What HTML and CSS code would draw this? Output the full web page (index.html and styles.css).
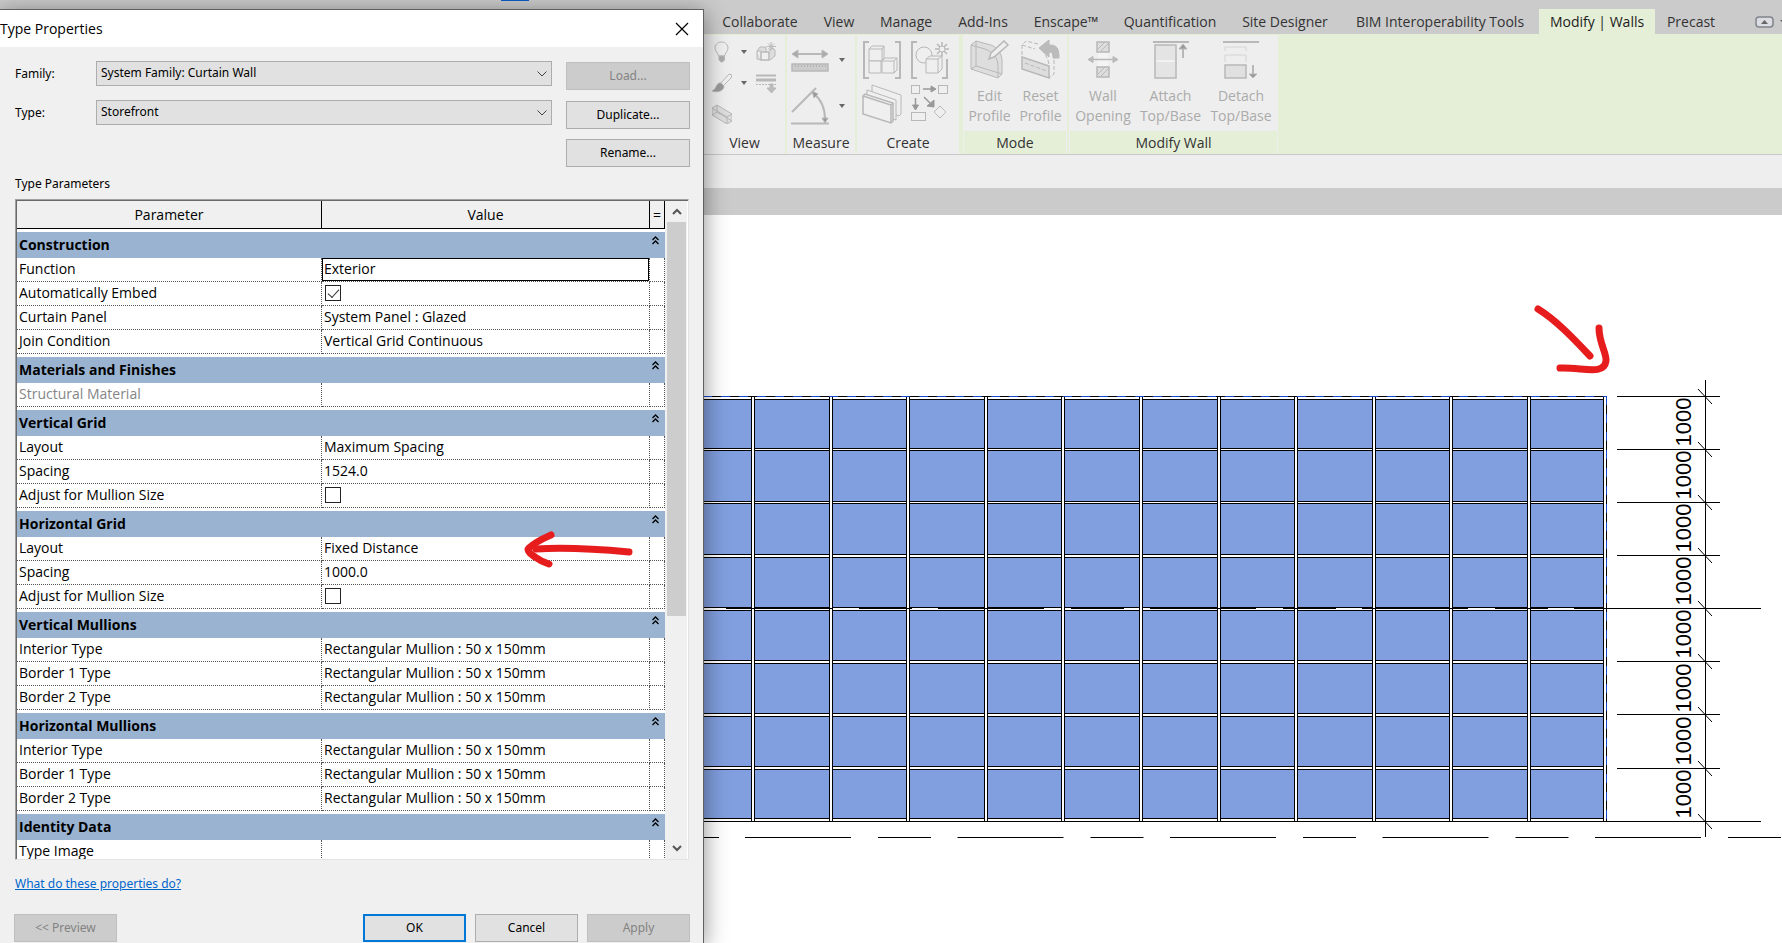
FILE: index.html
```html
<!DOCTYPE html>
<html lang="en">
<head>
<meta charset="utf-8">
<title>Type Properties</title>
<link rel="stylesheet" href="styles.css">
<script src="drawing.js" defer></script>
</head>
<body>
<div class="app">
  <nav class="tabs">
    <a class="tab" href="#">Collaborate</a>
    <a class="tab" href="#">View</a>
    <a class="tab" href="#">Manage</a>
    <a class="tab" href="#">Add-Ins</a>
    <a class="tab" href="#">Enscape™</a>
    <a class="tab" href="#">Quantification</a>
    <a class="tab" href="#">Site Designer</a>
    <a class="tab" href="#">BIM Interoperability Tools</a>
    <a class="tab active" href="#">Modify | Walls</a>
    <a class="tab" href="#">Precast</a>
    <button class="collapse" aria-label="Minimize ribbon">
      <svg width="27" height="12" viewBox="0 0 27 12"><rect x="1" y="1" width="17" height="10" rx="3" fill="#dcdde2" stroke="#80848c" stroke-width="1.5"/><path d="M6 8h7L9.500 4z" fill="#666"/><path d="M25 4h6l-3 3z" fill="#555"/></svg>
    </button>
  </nav>

  <div class="ribbon">
    <section class="panel">
      <div class="tools view-tools">
        <button class="tool" aria-label="Hide in view"><svg width="20" height="22" viewBox="0 0 20 22" class="ico"><path d="M9.500 1C5 1 3 4.500 3 7c0 3 3 5 3.500 8h6C13 12 16 10 16 7c0-2.500-2-6-6.500-6z"/><path d="M7 15v4l2 2h1.500l2-2v-4z" fill="#aaa"/></svg></button>
        <button class="tool" aria-label="Hide options"><span class="caret"></span></button>
        <button class="tool" aria-label="Displace elements"><svg width="20" height="20" viewBox="0 0 20 20" class="ico"><path d="M1 9l3-4h6v5M1 9v8l4 1M1 9h4M13 8l4-2 2 2v6l-5 4" fill="#ddd"/><rect x="5" y="10" width="8" height="8" stroke-width="1.500"/><path d="M15 0v9M11 4.500h9M12 1.500l6 6M18 1.500l-6 6"/></svg></button>
        <button class="tool" aria-label="Override graphics"><svg width="20" height="20" viewBox="0 0 20 20" class="ico"><path d="M8 11L17 1l3 1-1 3-8 8z"/><path d="M9 10c-5-1-4 6-9 8 5 2 12 0 12-5z" fill="#999"/></svg></button>
        <button class="tool" aria-label="Override options"><span class="caret"></span></button>
        <button class="tool" aria-label="Linework"><svg width="20" height="20" viewBox="0 0 20 20" class="ico"><path d="M0 2.500h20" stroke-width="2"/><path d="M0 7h20" stroke-width="3"/><path d="M0 11.500h20" stroke-dasharray="2 1"/><path d="M14 11h3v4h3l-4.500 5L11 15h3z" fill="#bbb"/></svg></button>
        <button class="tool" aria-label="Selection box"><svg width="20" height="20" viewBox="0 0 20 20" class="ico"><path d="M0 4l5-3 15 9v7l-5 3L0 11z" fill="#ddd"/><path d="M0 4l15 9v7M15 13l5-3M5 1v7l15 9M0 11l5-3" fill="none"/></svg></button>
      </div>
      <h2>View</h2>
    </section>
    <section class="panel">
      <div class="tools measure-tools">
        <button class="tool" aria-label="Measure"><svg width="38" height="24" viewBox="0 0 38 24" class="ico"><path d="M2 6h34" stroke-width="2"/><path d="M1 6l6-4v8zM37 6l-6-4v8z" fill="#aaa"/><rect x="1" y="16" width="36" height="7" fill="#ccc" stroke-width="1.500"/><path d="M4 18h31" stroke="#999" stroke-dasharray="1 2"/></svg></button>
        <button class="tool" aria-label="Measure options"><span class="caret"></span></button>
        <button class="tool" aria-label="Angular dimension"><svg width="38" height="38" viewBox="0 0 38 38" class="ico"><path d="M1 25L25 1M0 36.500h38" stroke-width="2"/><path d="M23 7c8 6 11 16 11 26" stroke-width="2" fill="none"/><path d="M21 4l6 3-4 4zM31 31h6l-3 5z" fill="#999"/></svg></button>
        <button class="tool" aria-label="Angle options"><span class="caret"></span></button>
      </div>
      <h2>Measure</h2>
    </section>
    <section class="panel">
      <div class="tools create-tools">
        <button class="tool" aria-label="Create group"><svg width="40" height="38" viewBox="0 0 40 38" class="ico"><path d="M7 1H2v36h5M33 1h5v36h-5" stroke-width="2" fill="none"/><path d="M7 8l3-3h12v12l-2 3M7 8h13v12H7zM20 8l2-3"/><path d="M7 20h12v12H7zM20 20h12v12H20zM20 20l3-3h12v12l-3 3M32 20l3-3"/></svg></button>
        <button class="tool" aria-label="Create similar"><svg width="40" height="38" viewBox="0 0 40 38" class="ico"><path d="M7 1H2v36h5M32 37h5V18" stroke-width="2" fill="none"/><circle cx="14" cy="14" r="8"/><path d="M16 18l4-3h12v13l-4 4M16 18h12v14H16zM28 18l4-3"/><path d="M32 1v14M25 8h14M27 3l10 10M37 3L27 13" stroke-width="1.500"/><circle cx="32" cy="8" r="3"/></svg></button>
        <button class="tool" aria-label="Create assembly"><svg width="40" height="40" viewBox="0 0 40 40" class="ico"><path d="M10 1l29 10v19l-2 2L10 20z"/><path d="M5 6l29 10v20L5 26z"/><path d="M1 12l2-2 28 9v18l-2 2L1 30zM1 12l28 9v18M29 21l2-2" stroke-width="1.500"/></svg></button>
        <button class="tool" aria-label="Create parts"><svg width="40" height="40" viewBox="0 0 40 40" class="ico"><rect x="1.500" y="1.500" width="8" height="8"/><rect x="28.500" y="1.500" width="9" height="8"/><rect x="1.500" y="28.500" width="14" height="8"/><path d="M30 22l6 6-6 6-6-6z"/><path d="M13 5h9M5.500 14v8M14 13l6 6" stroke="#999" stroke-width="1.500"/><path d="M21 2l5 3-5 3zM2.500 21h6l-3 5zM24 23v-7l-7 6z" fill="#999" stroke="#999"/></svg></button>
      </div>
      <h2>Create</h2>
    </section>
    <section class="panel contextual first">
      <div class="tools mode-tools">
        <button class="tool labelled" disabled><svg width="40" height="40" viewBox="0 0 40 40" class="ico"><path d="M1 5l5-4 15 4c7 3 11 9 11 16v13l-4 4L1 29z" fill="#dedede"/><path d="M1 5l14 4c8 3 13 9 13 17v12M1 29l5-3 26 8M6 1v25" fill="none"/><path d="M19 19l2-6L34 1l4 4-14 12z" stroke-width="1.500"/></svg><span>Edit<br>Profile</span></button>
        <button class="tool labelled" disabled><svg width="40" height="40" viewBox="0 0 40 40" class="ico"><path d="M1 17l27 9v12L1 29z" fill="#ddd" stroke-width="1.500"/><path d="M1 15V5l4-4 12 3M1 5l13 4M28 24c-1-5-3-9-6-12M33 20v14l-5 4M4 23l22 8" fill="none" stroke-dasharray="4 2"/><path d="M18 8l10-8v5c8 0 10 3 10 13h-6c0-5-1-6-4-6v5z" fill="#bbb"/></svg><span>Reset<br>Profile</span></button>
      </div>
      <h2>Mode</h2>
    </section>
    <section class="panel contextual">
      <div class="tools wall-tools">
        <button class="tool labelled" disabled><svg width="32" height="40" viewBox="0 0 32 40" class="ico"><path d="M10 2h12v10H10zM10 27h12v10H10z" fill="#ddd" stroke-width="1.500"/><path d="M11 9l7-7M14 11l8-8M11 34l7-7M14 36l8-8"/><path d="M11 13v13h10V13z" fill="#f4f4f4" stroke="none"/><path d="M4 19.500h24" stroke-width="1.500"/><path d="M1 19.500l5-3v6zM31 19.500l-5-3v6z" fill="#bbb"/></svg><span>Wall<br>Opening</span></button>
        <button class="tool labelled" disabled><svg width="38" height="40" viewBox="0 0 38 40" class="ico"><path d="M1 2h36" stroke-width="2"/><rect x="3" y="5" width="21" height="33" fill="#e4e4e4" stroke-width="1.500"/><path d="M4 21h19" stroke="#fff"/><path d="M31 18V9" stroke-width="2"/><path d="M27 9h8l-4-5z" fill="#999"/></svg><span>Attach<br>Top/Base</span></button>
        <button class="tool labelled" disabled><svg width="38" height="40" viewBox="0 0 38 40" class="ico"><path d="M1 2h36" stroke-width="2"/><path d="M3 11V7h21v4M3 22v-7h21v7" fill="none" stroke="#d4d4d4"/><rect x="3" y="25" width="21" height="13" fill="#e0e0e0" stroke-width="1.500"/><path d="M31 25v9" stroke-width="2"/><path d="M27 34h8l-4 4z" fill="#999"/></svg><span>Detach<br>Top/Base</span></button>
      </div>
      <h2>Modify Wall</h2>
    </section>
  </div>
  <div class="options-bar"></div>
  <div class="view-bar"></div>

  <main class="canvas">
    <svg id="elevation" class="elevation" viewBox="0 215 1782 728" role="img" aria-label="Curtain wall elevation"></svg>
  </main>
</div>

<div class="backdrop-strip"></div>

<form class="dialog" onsubmit="return false">
  <header class="title-bar">
    <h1>Type Properties</h1>
    <button class="close" aria-label="Close"><svg width="14" height="14" viewBox="0 0 14 14"><path d="M1 1l12 12M13 1L1 13" stroke="#000" stroke-width="1.200"/></svg></button>
  </header>
  <div class="body">
    <div class="pickers">
      <label for="family">Family:</label>
      <div class="select"><select id="family"><option>System Family: Curtain Wall</option></select><svg width="10" height="6" viewBox="0 0 10 6"><path d="M.5.5L5 5 9.500.5" fill="none" stroke="#444"/></svg></div>
      <button class="btn" disabled>Load...</button>
      <label for="type">Type:</label>
      <div class="select"><select id="type"><option>Storefront</option></select><svg width="10" height="6" viewBox="0 0 10 6"><path d="M.5.5L5 5 9.500.5" fill="none" stroke="#444"/></svg></div>
      <button class="btn">Duplicate...</button>
      <button class="btn last">Rename...</button>
    </div>
    <h2 class="caption">Type Parameters</h2>
    <div class="list">
      <div class="viewport">
        <table>
          <colgroup><col class="c-name"><col><col class="c-eq"></colgroup>
          <thead><tr><th>Parameter</th><th>Value</th><th>=</th></tr></thead>
          <tbody>
            <tr class="group"><th colspan="2">Construction</th><th><button class="fold" aria-label="Collapse"></button></th></tr>
            <tr><td><label for="fn">Function</label></td><td class="editing"><input id="fn" type="text" value="Exterior"></td><td></td></tr>
            <tr><td><label for="embed">Automatically Embed</label></td><td><input id="embed" type="checkbox" checked></td><td></td></tr>
            <tr><td>Curtain Panel</td><td>System Panel : Glazed</td><td></td></tr>
            <tr><td>Join Condition</td><td>Vertical Grid Continuous</td><td></td></tr>
            <tr class="group"><th colspan="2">Materials and Finishes</th><th><button class="fold" aria-label="Collapse"></button></th></tr>
            <tr class="off"><td>Structural Material</td><td></td><td></td></tr>
            <tr class="group"><th colspan="2">Vertical Grid</th><th><button class="fold" aria-label="Collapse"></button></th></tr>
            <tr><td>Layout</td><td>Maximum Spacing</td><td></td></tr>
            <tr><td>Spacing</td><td>1524.0</td><td></td></tr>
            <tr><td><label for="adj1">Adjust for Mullion Size</label></td><td><input id="adj1" type="checkbox"></td><td></td></tr>
            <tr class="group"><th colspan="2">Horizontal Grid</th><th><button class="fold" aria-label="Collapse"></button></th></tr>
            <tr><td>Layout</td><td>Fixed Distance</td><td></td></tr>
            <tr><td>Spacing</td><td>1000.0</td><td></td></tr>
            <tr><td><label for="adj2">Adjust for Mullion Size</label></td><td><input id="adj2" type="checkbox"></td><td></td></tr>
            <tr class="group"><th colspan="2">Vertical Mullions</th><th><button class="fold" aria-label="Collapse"></button></th></tr>
            <tr><td>Interior Type</td><td>Rectangular Mullion : 50 x 150mm</td><td></td></tr>
            <tr><td>Border 1 Type</td><td>Rectangular Mullion : 50 x 150mm</td><td></td></tr>
            <tr><td>Border 2 Type</td><td>Rectangular Mullion : 50 x 150mm</td><td></td></tr>
            <tr class="group"><th colspan="2">Horizontal Mullions</th><th><button class="fold" aria-label="Collapse"></button></th></tr>
            <tr><td>Interior Type</td><td>Rectangular Mullion : 50 x 150mm</td><td></td></tr>
            <tr><td>Border 1 Type</td><td>Rectangular Mullion : 50 x 150mm</td><td></td></tr>
            <tr><td>Border 2 Type</td><td>Rectangular Mullion : 50 x 150mm</td><td></td></tr>
            <tr class="group"><th colspan="2">Identity Data</th><th><button class="fold" aria-label="Collapse"></button></th></tr>
            <tr><td>Type Image</td><td></td><td></td></tr>
          </tbody>
        </table>
      </div>
      <div class="scrollbar">
        <button aria-label="Scroll up"><svg width="10" height="7" viewBox="0 0 10 7"><path d="M1 6l4-4 4 4" fill="none" stroke="#555" stroke-width="2"/></svg></button>
        <div class="track"><div class="thumb"></div></div>
        <button aria-label="Scroll down"><svg width="10" height="7" viewBox="0 0 10 7"><path d="M1 1l4 4 4-4" fill="none" stroke="#555" stroke-width="2"/></svg></button>
      </div>
    </div>
    <a class="help" href="#">What do these properties do?</a>
    <footer class="actions">
      <button class="btn preview" disabled>&lt;&lt; Preview</button>
      <button class="btn default">OK</button>
      <button class="btn">Cancel</button>
      <button class="btn" disabled>Apply</button>
    </footer>
  </div>
  <svg class="mark" width="112" height="40" viewBox="0 0 112 40"><g fill="none" stroke="#e71d1d" stroke-linecap="round" stroke-linejoin="round"><path d="M29 7C20 11 13 14 7 20c-3 3 3 7 6 9 4 3 8 5 14 7" stroke-width="7"/><path d="M14 21c32-2 61 0 93 3" stroke-width="7"/></g></svg>
</form>
</body>
</html>
```

FILE: styles.css
```css
* { box-sizing: border-box; }

body {
  margin: 0;
  height: 100vh;
  overflow: hidden;
  position: relative;
  background: #fff;
  font-family: "Open Sans", "Noto Sans", sans-serif;
  font-size: 14px;
  color: #000;
}

button { font: inherit; color: inherit; }
h1, h2 { margin: 0; font-weight: 400; }

/* Application window */
.app { height: 100%; display: flex; flex-direction: column; }

.tabs {
  height: 34px;
  flex: none;
  display: grid;
  grid-template-columns: 102px 56px 78px 76px 90px 118px 112px 198px 116px 72px 1fr;
  align-items: end;
  padding-left: 709px;
  background: #cbcbcb;
  overflow: hidden;
}

.tab {
  height: 25px;
  line-height: 26px;
  text-align: center;
  white-space: nowrap;
  text-decoration: none;
  color: #333;
}

.tab.active { background: #e5efd7; color: #1c1c1c; }

.collapse {
  justify-self: end;
  height: 24px;
  padding: 0;
  border: 0;
  background: none;
}

.ribbon {
  height: 121px;
  flex: none;
  display: flex;
  gap: 2px;
  padding: 1px 0 0 704px;
  background: #e5efd7;
  border-bottom: 1px solid #c8c8c8;
}

.panel { display: flex; flex-direction: column; background: #eee; }
.panel h2 {
  height: 23px;
  line-height: 24px;
  font-size: 14px;
  text-align: center;
  color: #333;
}
.panel.first { margin-left: 2px; }
.contextual { border: 1px solid #eee; border-bottom: 0; }
.contextual h2 { background: #e5efd7; }

.tools { flex: 1; display: grid; }
.view-tools { grid-template-columns: 20px 20px 20px; grid-auto-rows: 31px; column-gap: 2px; padding: 1px 9px 0 8px; }
.measure-tools { grid-template-columns: 38px 26px; grid-auto-rows: 46px; padding: 2px 0 0 4px; }
.create-tools { grid-template-columns: 40px 40px; grid-auto-rows: 40px; gap: 4px 8px; padding: 5px 9px 0 5px; }
.mode-tools { grid-template-columns: 51px 51px; padding-top: 4px; }
.wall-tools { grid-template-columns: 66px 69px 72px; padding-top: 4px; }

.tool {
  display: flex;
  align-items: center;
  justify-content: center;
  padding: 0;
  border: 0;
  background: none;
}
.tool.labelled {
  flex-direction: column;
  justify-content: flex-start;
  gap: 6px;
  line-height: 20px;
  white-space: nowrap;
  color: #ababab;
}
.labelled svg { flex: none; }
.ico { fill: #efefef; stroke: #b8b8b8; }

.caret {
  border: 3px solid transparent;
  border-top: 4px solid #666;
  border-bottom: 0;
}

.options-bar { height: 33px; flex: none; background: #eee; }
.view-bar { height: 27px; flex: none; background: #cbcbcb; }
.canvas { flex: 1; min-height: 0; overflow: hidden; }
.elevation { display: block; width: 100%; height: auto; }
.elevation text { font-family: "Liberation Sans", Arial, sans-serif; font-size: 22px; text-anchor: middle; }

/* Sliver of the parent window's toolbar above the dialog */
.backdrop-strip {
  position: absolute;
  top: 0;
  left: 501px;
  width: 28px;
  height: 1px;
  background: #0a5bc4;
}

/* Dialog */
.dialog {
  position: absolute;
  top: 9px;
  bottom: 0;
  left: 0;
  width: 704px;
  display: flex;
  flex-direction: column;
  background: #f0f0f0;
  border: solid #606060;
  border-width: 1px 1px 0 0;
  box-shadow: 0 4px 22px rgba(0, 0, 0, .45);
  font-family: "Noto Sans", "Open Sans", sans-serif;
  font-size: 12px;
}

.title-bar {
  height: 37px;
  flex: none;
  display: flex;
  align-items: center;
  justify-content: space-between;
  padding-right: 7px;
  background: #fff;
}
.title-bar h1 { font: 14px "Open Sans", sans-serif; }
.close { width: 28px; height: 28px; padding: 0; border: 0; background: none; display: grid; place-items: center; }

.body { flex: 1; min-height: 0; display: flex; flex-direction: column; padding: 14px 13px 1px 15px; }

.pickers {
  display: grid;
  grid-template-columns: 81px 1fr 124px;
  column-gap: 0;
  row-gap: 10px;
  line-height: 26px;
}
.pickers .btn { margin-top: 1px; height: 28px; }
.pickers .btn.last { grid-column: 3; margin-top: 0; }

.select { position: relative; margin-right: 14px; }
.select select {
  appearance: none;
  display: block;
  width: 100%;
  height: 25px;
  padding: 0 24px 1px 4px;
  border: 1px solid #adadad;
  border-radius: 0;
  background: #e1e1e1;
  font: inherit;
  line-height: 20px;
  color: #000;
}
.select svg { position: absolute; right: 5px; top: 10px; pointer-events: none; }

.btn {
  padding: 0;
  height: 28px;
  border: 1px solid #adadad;
  background: #e1e1e1;
  line-height: 24px;
}
.btn:disabled { background: #ccc; border-color: #bfbfbf; color: #838383; }
.btn.default { border: 2px solid #0078d7; }

.caption { margin-top: 7px; font-size: 12px; line-height: 20px; }

.list {
  flex: 1;
  min-height: 0;
  display: flex;
  margin: 5px 1px 0 0;
  background: #fff;
  border: 1px solid #a0a0a0;
  border-right-color: #e3e3e3;
  border-bottom-color: #e3e3e3;
  box-shadow: inset 1px 1px #696969;
  padding: 1px 1px 0 1px;
}
.viewport { flex: 1; min-width: 0; overflow: hidden; }

table {
  width: 100%;
  table-layout: fixed;
  border-collapse: separate;
  border-spacing: 0;
  font: 14px "Open Sans", sans-serif;
}
.c-name { width: 305px; }
.c-eq { width: 15px; }

thead th {
  height: 28px;
  padding: 0;
  font-weight: 400;
  background: #f0f0f0;
  border-right: 1px solid #000;
  border-bottom: 1px solid #000;
}

td {
  height: 24px;
  padding: 0 0 2px 2px;
  line-height: 20px;
  white-space: nowrap;
  border-right: 1px dotted #555;
  border-bottom: 1px dotted #555;
}
.off td { color: #858585; }

.group th {
  height: 29px;
  padding: 0 0 0 2px;
  line-height: 24px;
  text-align: left;
  font-weight: 700;
  background: #99b3d1;
  border-top: 3px solid #fff;
}
.group th:last-child { padding: 4px 0 0; vertical-align: top; }
.fold { display: block; width: 7px; height: 9px; margin-left: 2px; padding: 0; border: 0; background: none; }
.chevron { display: block; }

td.editing { padding: 0; }
td input[type="text"] {
  display: block;
  width: 100%;
  height: 23px;
  padding: 0 1px 2px;
  border: 1px solid #000;
  outline: 0;
  font: inherit;
}

input[type="checkbox"] {
  appearance: none;
  display: grid;
  place-items: center;
  width: 16px;
  height: 16px;
  margin: 1px 0 0 1px;
  border: 1px solid #222;
  background: #fff;
}
input[type="checkbox"]:checked::before {
  content: "";
  width: 10px;
  height: 5px;
  margin-bottom: 3px;
  border: solid #333;
  border-width: 0 0 1px 1px;
  transform: rotate(-48deg);
}

.scrollbar { width: 22px; flex: none; display: flex; flex-direction: column; background: #f0f0f0; padding: 0 1px 0 2px; }
.scrollbar button { height: 21px; padding: 0; border: 0; background: none; display: grid; place-items: center; }
.track { flex: 1; }
.thumb { height: 64%; background: #cdcdcd; }

.help { align-self: flex-start; margin-top: 14px; line-height: 20px; color: #0066cc; }

.actions {
  display: grid;
  grid-template-columns: 103px 1fr repeat(3, 103px);
  column-gap: 9px;
  margin: 20px 0 0 -1px;
}
.actions .default { grid-column: 3; }

.mark { position: absolute; left: 522px; top: 518px; pointer-events: none; }
```

FILE: drawing.js
```js
(() => {
  const svg = document.getElementById('elevation');
  const parts = [];
  const line = (x1, y1, x2, y2, extra = '') =>
    parts.push(`<path d="M${x1} ${y1}L${x2} ${y2}" ${extra}/>`);

  const left = 690, right = 1603;
  const head = 396, sill = 821;

  // Glazed panels
  parts.push(`<rect x="${left}" y="${head}" width="${right - left + 3}" height="${sill - head}" fill="#819ede"/>`);

  // Horizontal mullions
  const rows = [[396, 399], [448, 450], [501, 503], [554, 557], [607, 610], [660, 663], [713, 716], [766, 769], [818, 821]];
  rows.forEach(([a, b]) => {
    parts.push(`<rect x="${left}" y="${a}" width="${right - left}" height="${b - a + 1}" fill="#000"/>`);
    parts.push(`<rect x="${left}" y="${a + 1}" width="${right - left}" height="${b - a - 1}" fill="#fff"/>`);
  });

  // Vertical mullions
  for (let i = 0; i < 12; i++) {
    const x = i === 11 ? right : Math.round(751 + i * 77.6);
    parts.push(`<rect x="${x}" y="${head + 1}" width="4" height="${sill - head}" fill="#000"/>`);
    parts.push(`<rect x="${x + 1}" y="${head + 1}" width="2" height="${sill - head - 1}" fill="#fff"/>`);
  }

  parts.push('<g fill="none" stroke="#000">');
  line(left, 396.5, 1606, 396.5);
  line(1606.5, 396, 1606.5, 821);
  parts.push('</g><g fill="none" stroke="#1447c8" stroke-dasharray="9 9">');
  line(703, 396.5, 1606, 396.5);
  line(1606.5, 396, 1606.5, 821);
  parts.push('</g><g fill="none" stroke="#000">');

  // Level lines
  line(726, 608.5, 1606, 608.5, 'stroke-dasharray="106 27 53 26"');
  line(1575, 608.5, 1761, 608.5);
  line(left, 821.5, 1761, 821.5);
  line(666, 837.5, 719, 837.5);
  line(745, 837.5, 1782, 837.5, 'stroke-dasharray="106 27 53 26.500"');

  // Dimension string
  line(1705.5, 380, 1705.5, 837);
  [396, 449, 502, 555, 608, 661, 714, 768, 821].forEach((y) => {
    line(1617, y + .5, 1720, y + .5);
    line(1698, y - 7, 1712, y + 8);
  });
  parts.push('</g>');
  for (let i = 0; i < 8; i++) {
    const y = Math.round(422 + i * 53.1);
    parts.push(`<text transform="translate(1691 ${y}) rotate(-90)">1000</text>`);
  }

  // Markup arrow
  parts.push('<g fill="none" stroke="#e71d1d" stroke-width="7" stroke-linecap="round" stroke-linejoin="round">' +
    '<path d="M1538 309C1556 320 1574 339 1590 356"/>' +
    '<path d="M1599 328C1599 343 1607 354 1606 361C1604 376 1582 367 1560 368"/></g>');

  svg.innerHTML = parts.join('');

  // Fold chevrons in the group rows
  document.querySelectorAll('.fold').forEach((b) => {
    b.innerHTML = '<svg class="chevron" width="7" height="9" viewBox="0 0 7 9"><path d="M.5 4l3-3 3 3M.5 8l3-3 3 3" fill="none" stroke="#000" stroke-width="1.300"/></svg>';
  });
})();
```
